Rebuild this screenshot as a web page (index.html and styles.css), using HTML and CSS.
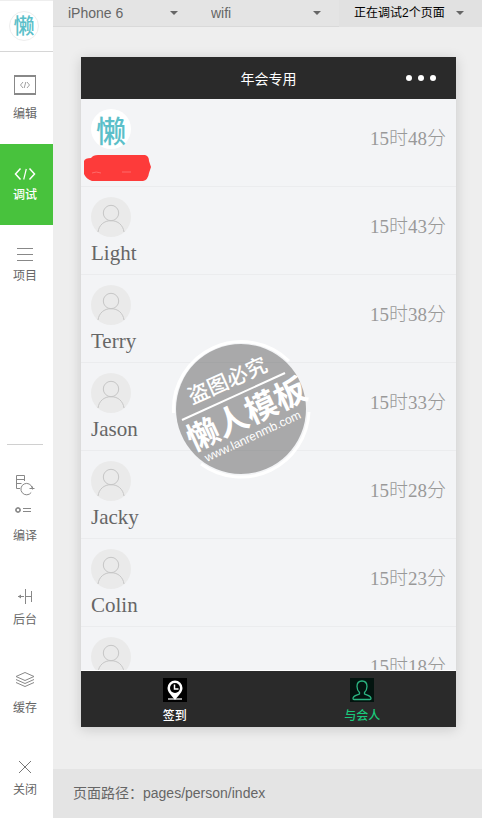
FILE: index.html
```html
<!DOCTYPE html>
<html lang="zh-CN">
<head>
    <meta charset="UTF-8">
    <meta name="viewport" content="width=device-width, initial-scale=1.0">
    <title>年会专用</title>
    <link rel="stylesheet" href="styles.css">
</head>
<body>
    <!-- shared avatar drawing -->
    <svg class="defs" aria-hidden="true">
        <symbol id="person" viewBox="0 0 40 40">
            <circle cx="20" cy="20" r="20" fill="#eaeaea"/>
            <g fill="none" stroke="#c6c6c6" stroke-width="1">
                <circle cx="20" cy="16" r="7.700"/>
                <path d="M7 35c1-7 6-11.300 13-11.300S32 28 33 35"/>
            </g>
        </symbol>
    </svg>

    <nav class="sidebar">
        <div class="brand"><span class="logo logo-small">懒</span></div>
        <button class="tool tool-edit">
            <svg width="22" height="20" viewBox="0 0 22 20" fill="none" stroke="#888">
                <path d="M.5 1v18M21.5 1v18"/>
                <path d="M0 1h22M0 19h22" stroke-width="2"/>
                <path d="M9 7L6.500 10L9 13M13 7l2.500 3L13 13M11.800 7l-1.600 6" stroke-width=".8"/>
            </svg>
            <span>编辑</span>
        </button>
        <button class="tool active">
            <svg width="22" height="14" viewBox="0 0 22 14" fill="none" stroke="#fff" stroke-width="1.500">
                <path d="M6.500 1.500L1.500 7l5 5.500M15.500 1.500l5 5.500-5 5.500"/>
                <path d="M12.300 2l-2.600 10.500" stroke-width="1.200"/>
            </svg>
            <span>调试</span>
        </button>
        <button class="tool">
            <svg width="16" height="14" viewBox="0 0 16 14" stroke="#888">
                <path d="M0 .5h16M0 6.500h16M0 12.500h16"/>
            </svg>
            <span>项目</span>
        </button>

        <div class="sidebar-bottom">
            <button class="tool-item">
                <svg width="22" height="48" viewBox="0 0 22 48" fill="none" stroke="#888">
                    <path d="M6 14.500H2.500v-13h8V7M2.500 5.500h8M2.500 9.500h5"/>
                    <path d="M17.200 18.500A5.700 5.700 0 1 1 18.200 14M15.500 14.500h5M18.500 12.500v3"/>
                    <circle cx="4" cy="36" r="2" stroke-width="1.500"/>
                    <path d="M4 33v1M4 38v1M1 36h1M6 36h1M2 34l.6.6M6 34l-.6.6M2 38l.6-.6M6 38l-.6-.6M9 34.500h8M9 37.500h8"/>
                </svg>
                <span>编译</span>
            </button>
            <button class="tool-item">
                <svg width="16" height="18" viewBox="0 0 16 18" fill="none" stroke="#888">
                    <path d="M8.500 1v15M14.500 3v11M8.500 8.500h6M1 8.500h6"/>
                    <path d="M1 8.500l3-2v4z" fill="#888" stroke="none"/>
                </svg>
                <span>后台</span>
            </button>
            <button class="tool-item">
                <svg width="20" height="22" viewBox="0 0 20 22" fill="none" stroke="#888">
                    <path d="M10 .5l9 4-9 4-9-4zM1 7.500l9 4 9-4M1 10.500l9 4 9-4"/>
                </svg>
                <span>缓存</span>
            </button>
            <button class="tool-item">
                <svg width="14" height="16" viewBox="0 0 14 16" stroke="#777">
                    <path d="M1 1l12 12M13 1L1 13"/>
                </svg>
                <span>关闭</span>
            </button>
        </div>
    </nav>

    <main class="workspace">
        <div class="toolbar">
            <label class="picker">
                <select aria-label="设备"><option>iPhone 6</option></select>
            </label>
            <label class="picker">
                <select aria-label="网络"><option>wifi</option></select>
            </label>
            <label class="picker picker-pages">
                <select aria-label="页面"><option>正在调试2个页面</option></select>
            </label>
        </div>

        <div class="stage">
            <section class="phone">
                <header class="navbar">
                    <h1>年会专用</h1>
                    <button class="more" aria-label="更多"><i></i><i></i><i></i></button>
                </header>

                <ul class="people">
                    <li>
                        <div class="person">
                            <span class="logo">懒</span>
                            <svg class="scribble" width="68" height="26" viewBox="0 0 68 26">
                                <path d="M7 3Q9 0 14 0H61Q65 1 65 6L67 12 65 18Q64 25 59 26H8Q2 24 0 19V6Q1 3 7 3z" fill="#fd3b3a"/>
                                <path d="M8 18q4-2 9 0M38 17h9" stroke="#fd6b6a" fill="none"/>
                            </svg>
                        </div>
                        <time>15时48分</time>
                    </li>
                    <li>
                        <div class="person"><svg class="avatar"><use href="#person"/></svg><span class="name">Light</span></div>
                        <time>15时43分</time>
                    </li>
                    <li>
                        <div class="person"><svg class="avatar"><use href="#person"/></svg><span class="name">Terry</span></div>
                        <time>15时38分</time>
                    </li>
                    <li>
                        <div class="person"><svg class="avatar"><use href="#person"/></svg><span class="name">Jason</span></div>
                        <time>15时33分</time>
                    </li>
                    <li>
                        <div class="person"><svg class="avatar"><use href="#person"/></svg><span class="name">Jacky</span></div>
                        <time>15时28分</time>
                    </li>
                    <li>
                        <div class="person"><svg class="avatar"><use href="#person"/></svg><span class="name">Colin</span></div>
                        <time>15时23分</time>
                    </li>
                    <li>
                        <div class="person"><svg class="avatar"><use href="#person"/></svg></div>
                        <time>15时18分</time>
                    </li>
                </ul>

                <div class="tabbar">
                    <button class="tab">
                        <svg width="24" height="24" viewBox="0 0 24 24">
                            <rect width="24" height="24" fill="#000"/>
                            <path d="M5 21h14" stroke="#ccc" stroke-width="1.500"/>
                            <path d="M12 2.500a7.500 7.500 0 0 0-7.500 7.500c0 4.500 4 7 7.500 12 3.500-5 7.500-7.500 7.500-12A7.500 7.500 0 0 0 12 2.500z" fill="#fff"/>
                            <circle cx="12" cy="10" r="5" fill="#000"/>
                            <path d="M11.500 6.500v4.500h4" fill="none" stroke="#fff" stroke-width="1.500"/>
                        </svg>
                        <span>签到</span>
                    </button>
                    <button class="tab selected">
                        <svg width="24" height="24" viewBox="0 0 24 24">
                            <rect width="24" height="24" fill="#03140f"/>
                            <path d="M12 3c-3 0-5 2-5 5.500 0 2.500 1 4.500 2.500 6v1.500c-2 1.200-6.500 1.500-6.500 4.500 0 .7.300 1 1 1h16c.7 0 1-.3 1-1 0-3-4.500-3.300-6.500-4.500v-1.500c1.500-1.500 2.500-3.500 2.500-6C17 5 15 3 12 3z" fill="none" stroke="#2bb480" stroke-width="1.300"/>
                        </svg>
                        <span>与会人</span>
                    </button>
                </div>

                <svg class="stamp" width="160" height="160" viewBox="0 0 160 160">
                    <circle cx="81" cy="79" r="65" fill="#555" fill-opacity=".47"/>
                    <path d="M13.500 83A68 68 0 0 1 129 31M149 82A68 68 0 0 1 41 134" fill="none" stroke="#fff" stroke-width="3"/>
                    <path d="M22 90L125 43" stroke="#fff" stroke-width="2"/>
                    <g fill="#fff">
                        <text class="stamp-top" transform="translate(38 63) rotate(-24)" x="-10" y="8">盗图必究</text>
                        <text class="stamp-name" transform="translate(43 104) rotate(-25)" x="-16" y="12">懒人模板</text>
                        <text class="stamp-url" transform="translate(47 132) rotate(-25)">www.lanrenmb.com</text>
                    </g>
                </svg>
            </section>
        </div>

        <footer class="path">页面路径：pages/person/index</footer>
    </main>
</body>
</html>
```
FILE: styles.css
```css
* {
    box-sizing: border-box;
}
body {
    display: flex;
    height: 100vh;
    margin: 0;
    font-family: "Liberation Sans", "Noto Sans CJK SC", sans-serif;
    font-size: 14px;
    color: #666;
    background-color: #eee;
}
button {
    padding: 0;
    border: 0;
    background: none;
    font-family: inherit;
    color: inherit;
    cursor: pointer;
}
svg {
    display: block;
}
.defs {
    position: absolute;
    width: 0;
    height: 0;
}

/* left tools */
.sidebar {
    display: flex;
    flex-direction: column;
    flex: none;
    width: 53px;
    background-color: #fff;
    border-top: 1px solid #eee;
}
.brand {
    height: 51px;
    padding: 10px 9px;
    border-bottom: 1px solid #d6d6d6;
}
.logo {
    display: flex;
    justify-content: center;
    align-items: center;
    width: 40px;
    height: 40px;
    border-radius: 50%;
    background-color: #fff;
    color: #5bbfc9;
    font-size: 30px;
    font-weight: 500;
    line-height: 40px;
}
.logo-small {
    width: 30px;
    height: 30px;
    border: 1px solid #eee;
    font-size: 21px;
    line-height: 28px;
}
.tool,
.tool-item {
    display: flex;
    flex-direction: column;
    justify-content: center;
    align-items: center;
    gap: 6px;
    padding-right: 3px;
    font-size: 12px;
    line-height: 16px;
}
.tool {
    height: 81px;
}
.tool-edit {
    height: 92px;
    gap: 11px;
}
.active {
    background-color: #48c23d;
    color: #fff;
    font-weight: 500;
}
.sidebar-bottom {
    display: flex;
    flex-direction: column;
    gap: 44px;
    margin-top: auto;
    padding-bottom: 20px;
}
.sidebar-bottom::before {
    content: "";
    height: 1px;
    margin: 0 10px -15px 7px;
    background-color: #d0d0d0;
}

/* right side */
.workspace {
    display: flex;
    flex-direction: column;
    flex: 1;
    min-width: 0;
}
.toolbar {
    display: grid;
    grid-template-columns: 1fr 1fr 1fr;
    height: 27px;
}
.picker {
    position: relative;
    background-color: #e4e4e4;
    border-bottom: 1px solid #d9d9d9;
}
.picker::after {
    content: "";
    position: absolute;
    top: 11px;
    right: 18px;
    border: 4px solid transparent;
    border-top-color: #666;
    border-bottom: 0;
    pointer-events: none;
}
.picker select {
    width: 100%;
    height: 26px;
    padding: 0 0 0 15px;
    border: 0;
    background: none;
    appearance: none;
    font-family: inherit;
    font-size: 14px;
    color: #666;
}
.picker-pages {
    background-color: #e1e1e1;
    border-color: #e1e1e1;
}
.picker-pages select {
    font-size: 12px;
    color: #000;
}
.stage {
    display: flex;
    flex: 1;
    min-height: 0;
    padding: 30px 26px 42px 28px;
}
.path {
    padding: 0 20px;
    background-color: #e4e4e4;
    line-height: 49px;
}

/* simulator */
.phone {
    position: relative;
    display: flex;
    flex-direction: column;
    flex: 1;
    min-width: 0;
    background-color: #f3f4f6;
    box-shadow: 0 2px 12px rgba(0, 0, 0, 0.16);
}
.navbar {
    display: grid;
    grid-template-columns: 1fr auto 1fr;
    align-items: center;
    height: 42px;
    padding: 0 20px;
    background-color: #2a2a2a;
    color: #fff;
}
.navbar h1 {
    grid-column: 2;
    margin: 0;
    font-size: 14px;
    font-weight: 400;
}
.more {
    display: flex;
    justify-self: end;
    gap: 6px;
}
.more i {
    width: 6px;
    height: 6px;
    border-radius: 50%;
    background-color: #fff;
}
.people {
    flex: 1;
    min-height: 0;
    margin: 0;
    padding: 0;
    overflow: hidden;
    list-style: none;
    border-bottom: 1px solid #fff;
    font-family: "Liberation Serif", "Noto Sans CJK SC", serif;
}
.people li {
    display: flex;
    justify-content: space-between;
    height: 88px;
    padding: 10px;
    border-bottom: 1px solid #ebecee;
}
.people time {
    font-size: 19px;
    font-weight: 300;
    line-height: 60px;
    color: #999;
}
.avatar {
    width: 40px;
    height: 40px;
}
.person .logo {
    font-family: "Noto Sans CJK SC", sans-serif;
}
.name {
    display: block;
    margin-top: 3px;
    font-size: 21px;
    line-height: 26px;
}
.scribble {
    margin: 6px 0 0 -7px;
}
.tabbar {
    display: flex;
    height: 56px;
    background-color: #2a2a2a;
    color: #fff;
}
.tab {
    display: flex;
    flex-direction: column;
    flex: 1;
    align-items: center;
    gap: 6px;
    padding-top: 7px;
    font-size: 12px;
    font-weight: 500;
    line-height: 16px;
}
.selected {
    color: #1ac97c;
}

/* round stamp lying over the list */
.stamp {
    position: absolute;
    top: 273px;
    left: 79px;
    pointer-events: none;
}
.stamp-top {
    font-size: 21px;
    font-weight: 500;
}
.stamp-name {
    font-size: 32px;
    font-weight: 700;
}
.stamp-url {
    font-size: 12px;
}
```
